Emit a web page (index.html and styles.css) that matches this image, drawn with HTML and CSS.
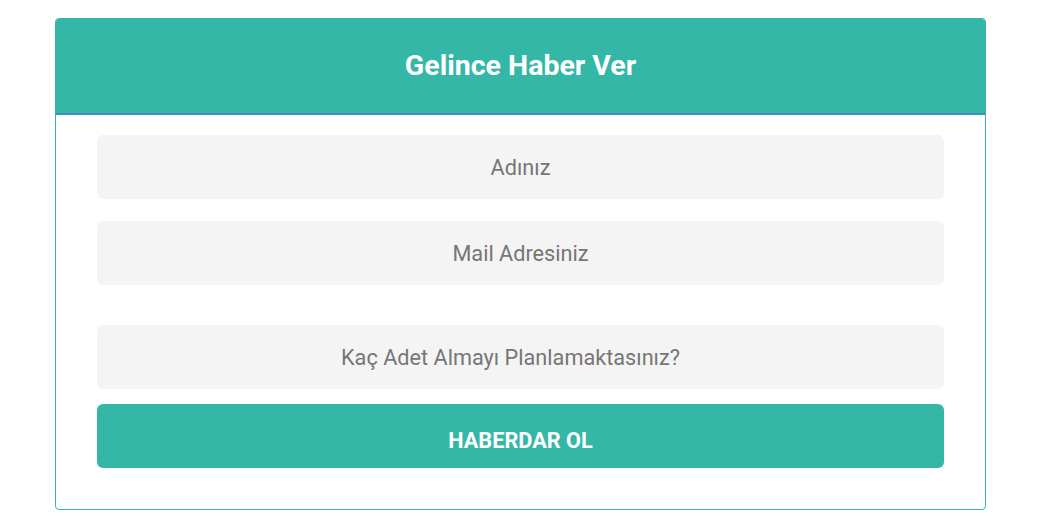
FILE: index.html
```html
<!DOCTYPE html>
<html lang="tr">
<head>
<meta charset="utf-8">
<link rel="stylesheet" href="styles.css">
</head>
<body>
<div class="card">
  <div class="card-header">Gelince Haber Ver</div>
  <form class="card-body">
    <div class="field first">Adınız</div>
    <div class="field">Mail Adresiniz</div>
    <div class="field spaced">Kaç Adet Almayı Planlamaktasınız?</div>
    <div class="btn">HABERDAR OL</div>
  </form>
</div>
</body>
</html>
```
FILE: styles.css
```css
html, body {
  margin: 0;
  padding: 0;
  background: #ffffff;
}
body {
  padding: 18px 0 0 55px;
  font-family: Roboto, "Liberation Sans", sans-serif;
}
.card {
  width: 929px;
  border: 1px solid #35b5a7;
  border-radius: 4px;
  overflow: hidden;
  background: #fff;
}
.card-header {
  box-sizing: border-box;
  height: 96px;
  background: #35b7a8;
  border-bottom: 2px solid #3a8fbf;
  color: #fff;
  font-weight: 700;
  font-size: 28.5px;
  display: flex;
  align-items: center;
  justify-content: center;
  padding-bottom: 1px;
}
.card-body {
  margin: 0;
  padding: 20px 41px 41px 41px;
  display: flex;
  flex-direction: column;
}
.field {
  height: 64px;
  background: #f4f4f4;
  border-radius: 6px;
  color: #767676;
  font-size: 21.7px;
  display: flex;
  align-items: center;
  justify-content: center;
  margin-top: 22px;
}
.field.first {
  margin-top: 0;
}
.field.spaced {
  margin-top: 40px;
  padding-right: 20px;
}
.btn {
  box-sizing: border-box;
  margin-top: 15px;
  height: 64px;
  padding-top: 8px;
  background: #35b7a8;
  border-radius: 6px;
  color: #fff;
  font-weight: 700;
  font-size: 21.7px;
  display: flex;
  align-items: center;
  justify-content: center;
}
```
